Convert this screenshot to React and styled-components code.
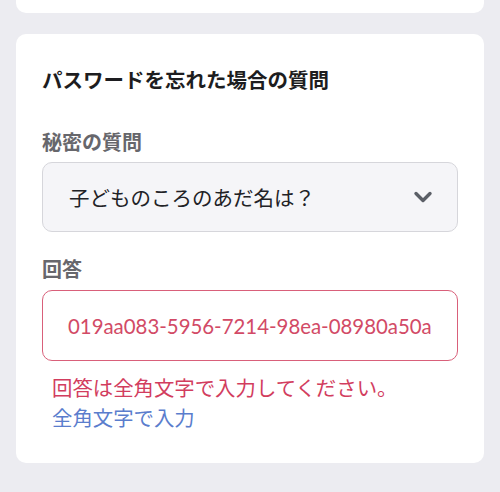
import React from "react";
import styled, { createGlobalStyle } from "styled-components";

const Global = createGlobalStyle`
  html, body { margin: 0; padding: 0; background: #ececf1; }
  body { font-family: Lato, "Noto Sans CJK JP", sans-serif; -webkit-font-smoothing: antialiased; }
  * { box-sizing: border-box; }
`;

const Page = styled.div`
  display: flex;
  flex-direction: column;
  gap: 21px;
  padding: 0 16px;
  min-height: 492px;
`;

const CardTail = styled.div`
  height: 13px;
  background: #fff;
  border-radius: 0 0 10px 10px;
`;

const Card = styled.section`
  background: #fff;
  border-radius: 10px;
  padding: 32px 26px 31px;
  display: flex;
  flex-direction: column;
`;

const Title = styled.h2`
  margin: 0;
  font-size: 20.5px;
  line-height: 28px;
  font-weight: 700;
  color: #1d1d20;
`;

const Label = styled.div`
  margin-top: ${(p) => p.$mt}px;
  font-size: 20px;
  line-height: 28px;
  font-weight: 700;
  color: #67676c;
`;

const Select = styled.div`
  margin-top: 6px;
  height: 70px;
  border: 1px solid #d6d6db;
  border-radius: 10px;
  background: #f5f5f8;
  display: flex;
  align-items: center;
  justify-content: space-between;
  padding: 0 24px 0 26px;
  font-size: 20.5px;
  color: #222226;
`;

const Input = styled.div`
  margin-top: 7px;
  height: 71px;
  border: 1.5px solid #d9607a;
  border-radius: 10px;
  background: #fff;
  display: flex;
  align-items: center;
  padding: 0 16px 0 25px;
  font-size: 20.4px;
  color: #d24a66;
  white-space: nowrap;
`;

const Message = styled.div`
  margin-top: ${(p) => p.$mt}px;
  padding-left: 10px;
  font-size: 20.4px;
  line-height: 28px;
  color: ${(p) => p.$color};
`;

const Chevron = () => (
  <svg width="20" height="14" viewBox="0 0 20 14">
    <polyline points="3,3.5 10,10.5 17,3.5" fill="none" stroke="#5b5f67" strokeWidth="3.4" strokeLinecap="round" strokeLinejoin="round" />
  </svg>
);

export default function App() {
  return (
    <>
      <Global />
      <Page>
        <CardTail />
        <Card>
          <Title>パスワードを忘れた場合の質問</Title>
          <Label $mt={34}>秘密の質問</Label>
          <Select>
            <span>子どものころのあだ名は？</span>
            <Chevron />
          </Select>
          <Label $mt={23}>回答</Label>
          <Input>019aa083-5956-7214-98ea-08980a50a</Input>
          <Message $mt={13} $color="#d23d5e">回答は全角文字で入力してください。</Message>
          <Message $mt={2} $color="#5a7dcd">全角文字で入力</Message>
        </Card>
      </Page>
    </>
  );
}
